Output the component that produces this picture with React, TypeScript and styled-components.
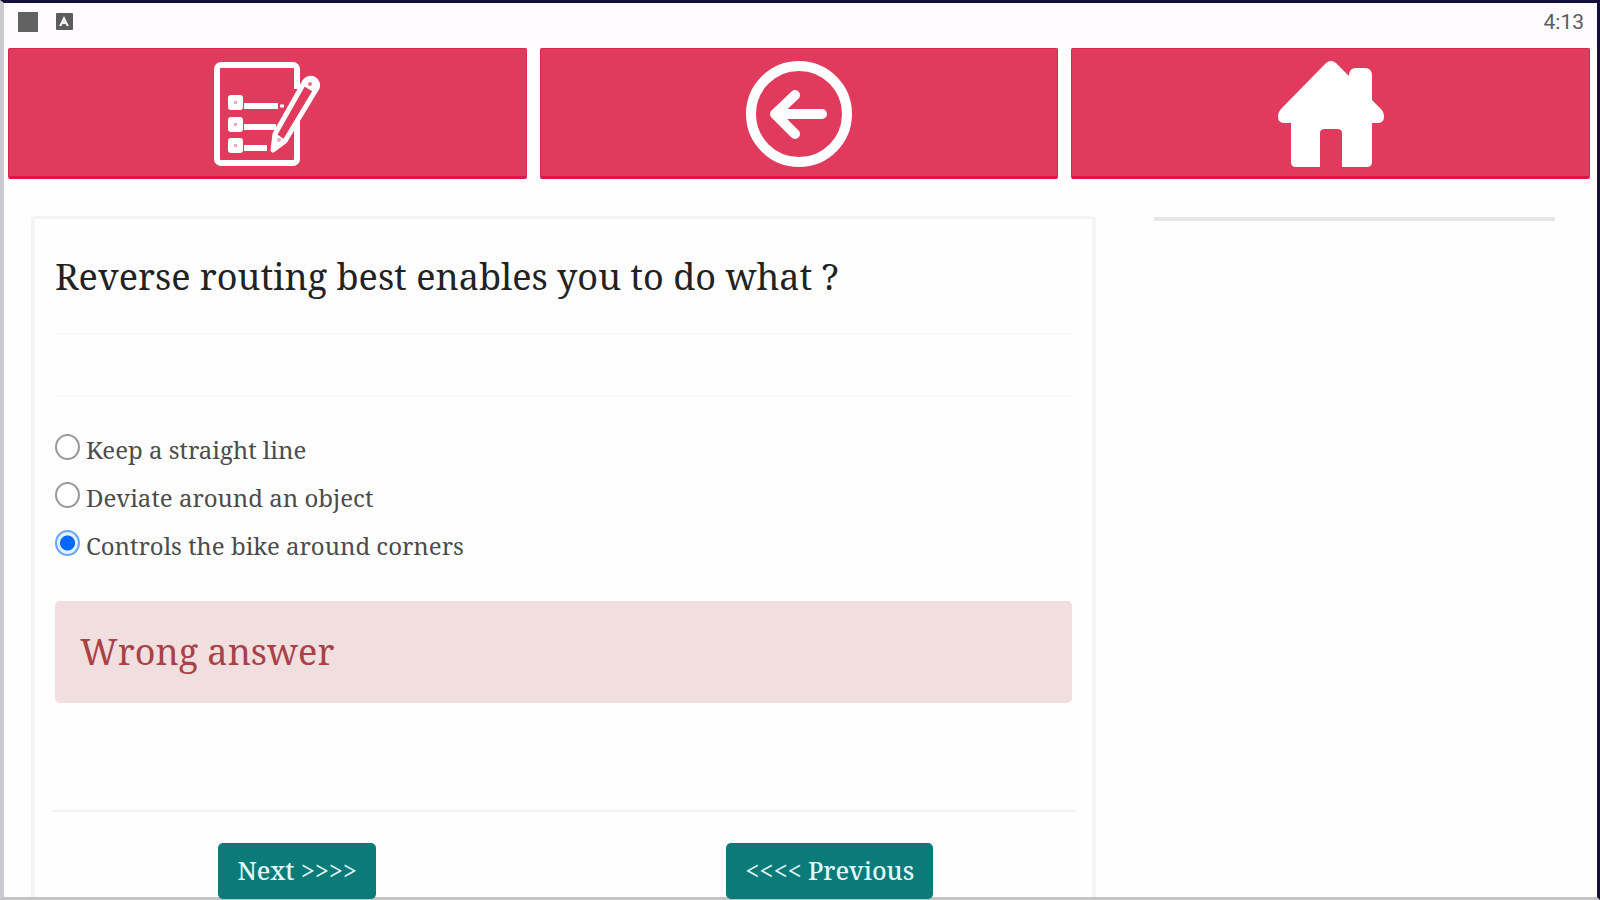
import React, { useState } from "react";
import styled, { createGlobalStyle } from "styled-components";

const serif = `"Noto Serif", "DejaVu Serif Condensed", "DejaVu Serif", serif`;

const GlobalStyle = createGlobalStyle`
  * { box-sizing: border-box; }
  body { margin: 0; background: #fefefe; font-family: ${serif}; }
`;

const Screen = styled.div`
  display: flex;
  flex-direction: column;
  min-height: 100vh;
  border-style: solid;
  border-width: 3px 3px 3px 4px;
  border-color: #14103a #14103a #c4c4c4 #cbcad0;
  background: #fefefe;
`;

const StatusBar = styled.header`
  display: flex;
  align-items: center;
  justify-content: space-between;
  height: 45px;
  padding: 0 13px 8px 14px;
  background: #fdfbfe;
`;

const StatusIcons = styled.div`
  display: flex;
  align-items: center;
  gap: 18px;
`;

const Clock = styled.time`
  font: 400 21px/24px Roboto, sans-serif;
  color: #5c5c5e;
`;

const Toolbar = styled.nav`
  display: grid;
  grid-template-columns: repeat(3, 1fr);
  gap: 13px;
  padding: 0 7px 0 4px;
`;

const ToolButton = styled.button`
  display: flex;
  align-items: center;
  justify-content: center;
  height: 131px;
  padding: 3px 0 0;
  border: 1px solid #dc2450;
  border-bottom: 3px solid #d9174a;
  border-radius: 2px;
  background: #e03a5d;
  cursor: pointer;
`;

const Content = styled.main`
  display: grid;
  flex: 1;
  grid-template-columns: 1065fr 401fr;
  gap: 58px;
  padding: 37px 42px 0 27px;
`;

const Card = styled.section`
  padding: 0 20px;
  border: 4px solid #f4f4f4;
  border-top-width: 3px;
  border-bottom: 0;
  border-radius: 4px 4px 0 0;
`;

const Aside = styled.aside`
  height: 4px;
  margin-top: 1px;
  background: #e6e6e6;
`;

const Question = styled.h1`
  margin: 0;
  padding: 32px 0 30px;
  font-size: 36px;
  font-weight: 400;
  line-height: 52px;
  color: #222;
`;

const Rule = styled.hr<{ $wide?: boolean }>`
  height: 2px;
  margin: 0 ${(p) => (p.$wide ? "-4px" : "0")};
  border: 0;
  background: ${(p) => (p.$wide ? "#f4f4f4" : "#f8f8f8")};
`;

const Hint = styled.div`
  height: 60px;
`;

const Options = styled.fieldset`
  display: grid;
  gap: 8px;
  margin: 0;
  padding: 33px 0 35px;
  border: 0;
`;

const Option = styled.label`
  display: flex;
  align-items: flex-start;
  gap: 6px;
  font-size: 24px;
  line-height: 40px;
  color: #4c4c4c;
`;

const Radio = styled.input`
  appearance: none;
  flex: none;
  width: 25px;
  height: 26px;
  margin: 4px 0 0;
  border: 2px solid #9a9a9a;
  border-radius: 50%;
  background: #fff;

  &:checked {
    border-color: #69a6f8;
    background: radial-gradient(circle, #0668fb 0 7px, #e4f0ff 8px);
  }
`;

const Alert = styled.div`
  padding: 25px;
  border-radius: 5px;
  background: #f1dede;
  font-size: 36px;
  line-height: 52px;
  color: #a94145;
`;

const Spacer = styled.div`
  height: 107px;
`;

const Pager = styled.div`
  display: grid;
  grid-template-columns: 1fr 1fr;
  justify-items: center;
  margin: 0 -24px -2px;
  padding-top: 31px;
`;

const PagerButton = styled.button`
  height: 56px;
  padding: 0 19px 2px;
  border: 0;
  border-radius: 5px;
  background: #0a7b79;
  font: 500 25px/36px ${serif};
  color: #e4f6f6;
  cursor: pointer;
`;

const ChecklistIcon = () => (
  <svg width="106" height="106" viewBox="0 0 106 106" fill="none" stroke="#fff" aria-hidden="true">
    <path strokeWidth="6" strokeLinejoin="round" d="M83 28V8a4 4 0 0 0-4-4H7a4 4 0 0 0-4 4v90a4 4 0 0 0 4 4h72a4 4 0 0 0 4-4V58" />
    <path strokeWidth="6" d="M30 45h34M30 66h32M30 87h23" />
    <path strokeWidth="3" d="M66 45h4" />
    <g fill="#f3a9ba" strokeWidth="6" strokeLinejoin="round">
      <rect x="17" y="37" width="9" height="9" />
      <rect x="17" y="59" width="9" height="9" />
      <rect x="17" y="80" width="9" height="9" />
    </g>
    <path fill="#e03a5d" strokeWidth="5" strokeLinejoin="round" d="M91 20a7 7 0 0 1 12 7L71 80 59 89l2-16z" />
    <path fill="#fff" strokeWidth="2" d="M61 73l10 7-12 9zM88 23l12 7 4-8-8-6z" />
    <circle cx="96" cy="23" r="2" fill="#e8708a" stroke="none" />
    <circle cx="65" cy="79" r="2" fill="#f3a9ba" stroke="none" />
  </svg>
);

const BackIcon = () => (
  <svg width="106" height="106" viewBox="0 0 106 106" fill="none" stroke="#fff" strokeWidth="10" aria-hidden="true">
    <circle cx="53" cy="53" r="48" />
    <path strokeLinecap="round" strokeLinejoin="round" d="M76 53H29M49 34L29 53l20 20" />
  </svg>
);

const HomeIcon = () => (
  <svg width="106" height="106" viewBox="0 0 106 106" fill="#fff" aria-hidden="true">
    <path d="M48 2q5-4 10 0l13 13q0-8 7-8h9q7 0 7 8v24l9 9q3 3 3 8 0 6-7 6h-5v39q0 5-5 5H64V72q0-4-5-4H47q-5 0-5 4v34H18q-5 0-5-5V62H7q-7 0-7-6 0-5 3-8z" />
  </svg>
);

const answers = ["Keep a straight line", "Deviate around an object", "Controls the bike around corners"];

export default function App() {
  const [selected, setSelected] = useState(2);
  return (
    <>
      <GlobalStyle />
      <Screen>
        <StatusBar>
          <StatusIcons>
            <svg width="20" height="20" aria-hidden="true">
              <rect width="20" height="20" fill="#626262" />
            </svg>
            <svg width="17" height="17" aria-hidden="true">
              <rect width="17" height="17" rx="1" fill="#5c5c5c" />
              <path d="M8 3l5 10h-2.500l-1-2h-3l-1 2H3z" fill="#eee" />
            </svg>
          </StatusIcons>
          <Clock>4:13</Clock>
        </StatusBar>
        <Toolbar>
          <ToolButton aria-label="Tests"><ChecklistIcon /></ToolButton>
          <ToolButton aria-label="Back"><BackIcon /></ToolButton>
          <ToolButton aria-label="Home"><HomeIcon /></ToolButton>
        </Toolbar>
        <Content>
          <Card>
            <Question>Reverse routing best enables you to do what ?</Question>
            <Rule />
            <Hint />
            <Rule />
            <Options>
              {answers.map((text, i) => (
                <Option key={text}>
                  <Radio type="radio" name="answer" checked={selected === i} onChange={() => setSelected(i)} />
                  {text}
                </Option>
              ))}
            </Options>
            <Alert role="alert">Wrong answer</Alert>
            <Spacer />
            <Rule $wide />
            <Pager>
              <PagerButton>Next &gt;&gt;&gt;&gt;</PagerButton>
              <PagerButton>&lt;&lt;&lt;&lt; Previous</PagerButton>
            </Pager>
          </Card>
          <Aside />
        </Content>
      </Screen>
    </>
  );
}
